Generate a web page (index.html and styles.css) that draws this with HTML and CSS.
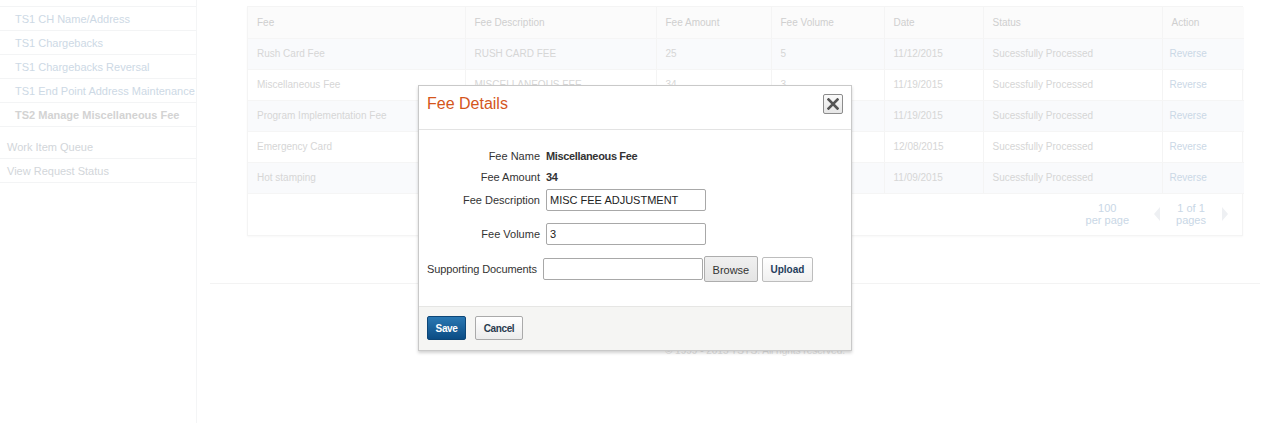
FILE: index.html
```html
<!DOCTYPE html>
<html>
<head>
<meta charset="utf-8">
<link rel="stylesheet" href="styles.css">
</head>
<body>
<div class="page">
  <aside class="sidebar">
    <ul class="subnav">
      <li class="sub">TS1 CH Name/Address</li>
      <li class="sub">TS1 Chargebacks</li>
      <li class="sub">TS1 Chargebacks Reversal</li>
      <li class="sub">TS1 End Point Address Maintenance</li>
      <li class="sub active">TS2 Manage Miscellaneous Fee</li>
    </ul>
    <ul class="mainnav">
      <li>Work Item Queue</li>
      <li>View Request Status</li>
    </ul>
  </aside>
  <main class="main">
    <div class="content">
      <div class="card">
        <table class="grid">
          <colgroup>
            <col style="width:217px"><col style="width:191px"><col style="width:115px"><col style="width:113px"><col style="width:99px"><col style="width:179px"><col style="width:82px">
          </colgroup>
          <thead>
            <tr><th>Fee</th><th>Fee Description</th><th>Fee Amount</th><th>Fee Volume</th><th>Date</th><th>Status</th><th>Action</th></tr>
          </thead>
          <tbody>
            <tr><td>Rush Card Fee</td><td>RUSH CARD FEE</td><td>25</td><td>5</td><td>11/12/2015</td><td>Sucessfully Processed</td><td class="link">Reverse</td></tr>
            <tr><td>Miscellaneous Fee</td><td>MISCELLANEOUS FEE</td><td>34</td><td>3</td><td>11/19/2015</td><td>Sucessfully Processed</td><td class="link">Reverse</td></tr>
            <tr><td>Program Implementation Fee</td><td>PROGRAM IMPLEMENTATION FEE</td><td>100</td><td>1</td><td>11/19/2015</td><td>Sucessfully Processed</td><td class="link">Reverse</td></tr>
            <tr><td>Emergency Card</td><td>EMERGENCY CARD</td><td>15</td><td>2</td><td>12/08/2015</td><td>Sucessfully Processed</td><td class="link">Reverse</td></tr>
            <tr><td>Hot stamping</td><td>HOT STAMPING</td><td>10</td><td>4</td><td>11/09/2015</td><td>Sucessfully Processed</td><td class="link">Reverse</td></tr>
          </tbody>
        </table>
        <div class="pager">
          <div class="pg-block">100<br>per page</div>
          <span class="arrow left"></span>
          <div class="pg-block">1 of 1<br>pages</div>
          <span class="arrow right"></span>
        </div>
      </div>
    </div>
    <footer class="footer">© 1999 - 2015 TSYS. All rights reserved.</footer>
  </main>
</div>

<div class="modal">
  <div class="modal-header">
    <h2 class="modal-title">Fee Details</h2>
    <button class="close" type="button" aria-label="Close">
      <svg width="12" height="12" viewBox="0 0 12 12"><path d="M1.5 1.5 L10.5 10.5 M10.5 1.5 L1.5 10.5" stroke="#555" stroke-width="2.6" stroke-linecap="square"/></svg>
    </button>
  </div>
  <div class="modal-body">
    <div class="row r-text"><span class="label">Fee Name</span><span class="value">Miscellaneous Fee</span></div>
    <div class="row r-text"><span class="label">Fee Amount</span><span class="value">34</span></div>
    <div class="row r-input first"><span class="label">Fee Description</span><input class="field" type="text" value="MISC FEE ADJUSTMENT"></div>
    <div class="row r-input second"><span class="label">Fee Volume</span><input class="field" type="text" value="3"></div>
    <div class="row r-file"><span class="label file-label">Supporting Documents</span><input class="field" type="text" value=""><button class="btn browse" type="button">Browse</button><button class="btn upload" type="button">Upload</button></div>
  </div>
  <div class="modal-footer">
    <button class="btn save" type="button">Save</button>
    <button class="btn cancel" type="button">Cancel</button>
  </div>
</div>
</body>
</html>
```
FILE: styles.css
```css
* { box-sizing: border-box; }
html, body { margin: 0; padding: 0; background: #fff; }
body {
  font-family: "Liberation Sans", Arial, sans-serif;
  width: 1274px;
  height: 423px;
  overflow: hidden;
  position: relative;
}
.page { display: flex; height: 423px; }

/* sidebar */
.sidebar {
  width: 197px;
  flex: none;
  border-right: 1px solid #f4f5f6;
  padding-top: 6px;
}
.sidebar ul { list-style: none; margin: 0; padding: 0; }
.sidebar .subnav { border-top: 1px solid #f3f4f5; }
.sidebar li {
  height: 24px;
  line-height: 24px;
  font-size: 11px;
  border-bottom: 1px solid #f3f4f5;
  white-space: nowrap;
}
.sub { padding-left: 15px; color: #cdd9e5; }
.sub.active { color: #d3d3d3; font-weight: bold; }
.sidebar .mainnav { margin-top: 8px; }
.mainnav li { padding-left: 7px; color: #d2d6da; }

/* main */
.main { flex: 1; margin-left: 13px; }
.content { padding: 6px 31px 0 37px; }
.card {
  width: 996px;
  border: 1px solid #f4f4f4;
  box-shadow: 0 1px 2px rgba(0,0,0,0.03);
}
.grid { border-collapse: collapse; table-layout: fixed; width: 100%; font-size: 10px; }
.grid th, .grid td {
  height: 31px;
  padding: 0 9px;
  text-align: left;
  font-weight: normal;
  border-left: 1px solid #f4f4f4;
  border-bottom: 1px solid #f5f5f5;
  white-space: nowrap;
  overflow: hidden;
}
.grid th:first-child, .grid td:first-child { border-left: none; }
.grid th { background: #fbfbfb; color: #cfcfcf; }
.grid td { color: #d6d6d6; }
.grid tbody tr:nth-child(odd) td { background: #f9fafc; }
.grid td.link { color: #cbd8e6; padding-left: 7px; }
.pager {
  height: 41px;
  display: flex;
  justify-content: flex-end;
  align-items: center;
  padding-right: 14px;
  color: #c9d7e6;
  font-size: 11px;
}
.pg-block { text-align: center; line-height: 12px; }
.pg-block:first-child { margin-right: 25px; }
.arrow { width: 0; height: 0; border-top: 7px solid transparent; border-bottom: 7px solid transparent; }
.arrow.left { border-right: 6px solid #eef0f3; margin-right: 16px; }
.arrow.right { border-left: 6px solid #eef0f3; margin-left: 16px; }
.footer {
  margin-top: 47px;
  margin-right: 14px;
  border-top: 1px solid #f3f3f3;
  padding-top: 61px;
  text-align: center;
  font-size: 10px;
  line-height: 12px;
  color: #e2e2e2;
  padding-left: 40px;
}

/* modal */
.modal {
  position: absolute;
  left: 418px;
  top: 85px;
  width: 434px;
  background: #fff;
  border: 1px solid #c9c9c9;
  box-shadow: 0 2px 3px rgba(0,0,0,0.18);
}
.modal-header {
  height: 44px;
  border-bottom: 1px solid #e3e3e3;
  display: flex;
  justify-content: space-between;
  align-items: flex-start;
  padding: 8px 8px 0 8px;
}
.modal-title {
  margin: 0;
  font-size: 16px;
  line-height: 20px;
  font-weight: normal;
  color: #d4561c;
}
.close {
  width: 20px;
  height: 20px;
  padding: 0;
  margin: 0;
  border: 1px solid #8c8c8c;
  border-radius: 2px;
  background: linear-gradient(#fafafa, #e6e6e6);
  display: flex;
  align-items: center;
  justify-content: center;
}
.close svg { display: block; }
.modal-body {
  padding: 16px 0 24px 8px;
  display: flex;
  flex-direction: column;
  font-size: 11px;
  line-height: 13px;
  color: #333;
}
.row { display: flex; align-items: center; }
.label { width: 113px; text-align: right; margin-right: 6px; flex: none; white-space: nowrap; }
.r-text { height: 21px; }
.value { font-weight: bold; letter-spacing: -0.35px; white-space: nowrap; }
.r-input { height: 22px; }
.r-input.first { margin-top: 1px; }
.r-input.second { margin-top: 12px; }
.r-file { height: 26px; margin-top: 11px; }
.file-label { width: auto; margin-right: 6px; letter-spacing: -0.1px; }
.field {
  width: 160px;
  height: 22px;
  border: 1px solid #a8a8a8;
  border-radius: 2px;
  padding: 0 3px;
  font-family: "Liberation Sans", Arial, sans-serif;
  font-size: 11px;
  color: #222;
  margin: 0;
}
.btn {
  font-family: "Liberation Sans", Arial, sans-serif;
  margin: 0;
  padding: 0;
  border-radius: 2px;
  cursor: pointer;
}
.browse {
  width: 54px;
  height: 26px;
  margin-left: 1px;
  border: 1px solid #adadad;
  background: linear-gradient(#f0f0f0, #e4e4e4);
  font-size: 11px;
  color: #333;
  padding-top: 2px;
}
.upload {
  width: 51px;
  height: 25px;
  margin-left: 4px;
  border: 1px solid #bdbdbd;
  background: linear-gradient(#ffffff, #f0f0f0);
  font-size: 10px;
  font-weight: bold;
  color: #243d5c;
}
.modal-footer {
  height: 44px;
  border-top: 1px solid #e6e6e4;
  background: #f5f5f3;
  padding: 9px 8px 0 8px;
  display: flex;
  align-items: flex-start;
}
.save {
  width: 39px;
  height: 24px;
  border: 1px solid #0d4677;
  background: linear-gradient(#2a78b3, #0b4c84);
  color: #fff;
  font-size: 10px;
  font-weight: bold;
  letter-spacing: -0.4px;
}
.cancel {
  width: 48px;
  height: 24px;
  margin-left: 9px;
  border: 1px solid #aaa;
  background: linear-gradient(#ffffff, #ececec);
  color: #2a3b4e;
  font-size: 10px;
  font-weight: bold;
  letter-spacing: -0.4px;
}
```
